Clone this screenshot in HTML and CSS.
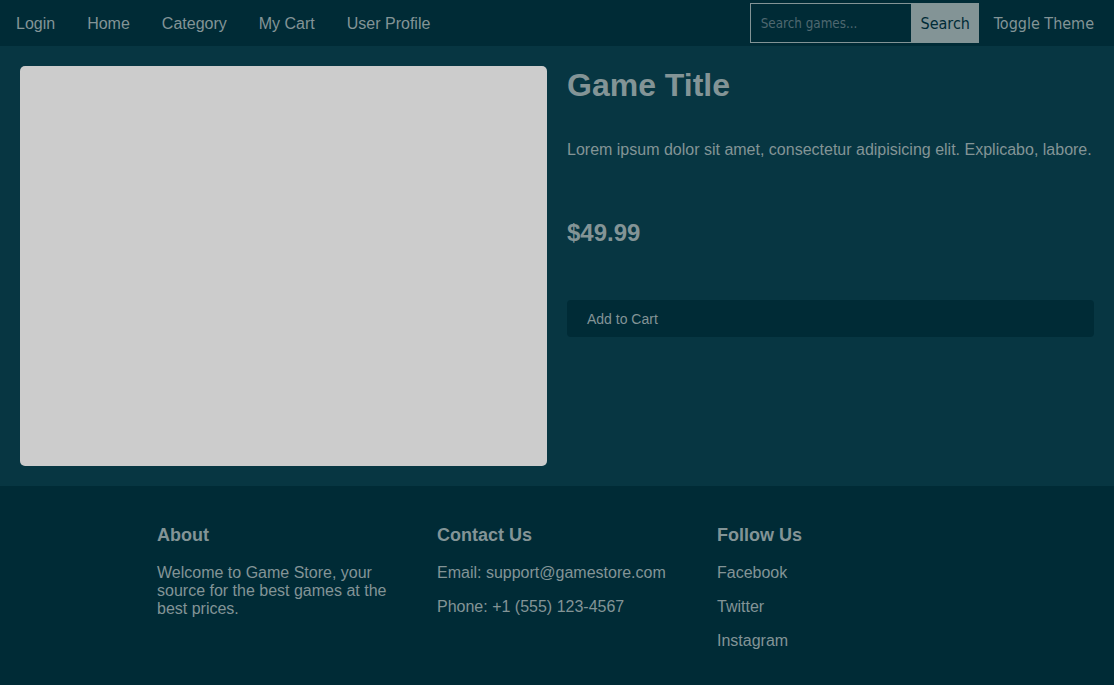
FILE: index.html
```html
<!DOCTYPE html>
<html lang="en">
<head>
<meta charset="utf-8">
<title>Game Store</title>
<link rel="stylesheet" href="styles.css">
</head>
<body>
<nav class="topnav">
  <div class="nav-links">
    <a href="#">Login</a>
    <a href="#">Home</a>
    <a href="#">Category</a>
    <a href="#">My Cart</a>
    <a href="#">User Profile</a>
  </div>
  <div class="nav-tools">
    <form class="search">
      <input type="text" placeholder="Search games...">
      <button type="button" class="search-btn">Search</button>
    </form>
    <button type="button" class="theme-btn">Toggle Theme</button>
  </div>
</nav>
<main class="product">
  <div class="product-image"></div>
  <div class="product-info">
    <h1 class="title">Game Title</h1>
    <p class="desc">Lorem ipsum dolor sit amet, consectetur adipisicing elit. Explicabo, labore.</p>
    <p class="price">$49.99</p>
    <button type="button" class="cart-btn">Add to Cart</button>
  </div>
</main>
<footer class="footer">
  <div class="footer-inner">
    <section class="footer-col">
      <h3>About</h3>
      <p>Welcome to Game Store, your source for the best games at the best prices.</p>
    </section>
    <section class="footer-col">
      <h3>Contact Us</h3>
      <p>Email: support@gamestore.com</p>
      <p>Phone: +1 (555) 123-4567</p>
    </section>
    <section class="footer-col">
      <h3>Follow Us</h3>
      <p><a href="#">Facebook</a></p>
      <p><a href="#">Twitter</a></p>
      <p><a href="#">Instagram</a></p>
    </section>
  </div>
</footer>
</body>
</html>
```

FILE: styles.css
```css
* { box-sizing: border-box; }
html, body { margin: 0; padding: 0; }
body {
  font-family: "Liberation Sans", Arial, sans-serif;
  font-size: 16px;
  color: #839496;
  background: #002b36;
}
a { color: #839496; text-decoration: none; }

.topnav {
  height: 46px;
  background: #002b36;
  display: flex;
  align-items: center;
  justify-content: space-between;
}
.nav-links { display: flex; align-items: center; height: 46px; }
.nav-links a { padding: 2px 16px 0; line-height: 44px; }
.nav-tools { display: flex; align-items: center; }
.search { display: flex; margin: 0; }
.search input {
  width: 162px;
  height: 40px;
  border: 1px solid #839496;
  background: #002b36;
  color: #839496;
  padding: 0 10px;
  font-family: "DejaVu Sans Condensed", "DejaVu Sans", sans-serif;
  font-size: 13.333px;
  outline: none;
}
.search input::placeholder { color: #4f6870; }
.search-btn {
  height: 40px;
  width: 67px;
  border: none;
  background: #839496;
  color: #002b36;
  font-family: "DejaVu Sans Condensed", "DejaVu Sans", sans-serif;
  font-size: 16px;
  padding: 0;
}
.theme-btn {
  height: 40px;
  border: none;
  background: transparent;
  color: #839496;
  font-family: "DejaVu Sans Condensed", "DejaVu Sans", sans-serif;
  font-size: 16px;
  padding: 0 20px 0 15px;
}

.product {
  background: #073642;
  display: grid;
  grid-template-columns: 1fr 1fr;
  gap: 20px;
  padding: 20px;
}
.product-image {
  height: 400px;
  background: #cccccc;
  border-radius: 5px;
}
.product-info { display: flex; flex-direction: column; align-items: stretch; }
.title {
  margin: 1px 0 0;
  font-size: 32px;
  font-weight: bold;
  line-height: 37px;
}
.desc { margin: 37px 0 0; line-height: 18px; }
.price {
  margin: 60px 0 0;
  font-size: 24px;
  font-weight: bold;
  line-height: 28px;
}
.cart-btn {
  margin-top: 53px;
  height: 37px;
  border: none;
  border-radius: 4px;
  background: #002b36;
  color: #839496;
  font-family: "Liberation Sans", Arial, sans-serif;
  font-size: 14px;
  text-align: left;
  padding: 0 20px;
}

.footer { background: #002b36; padding: 20px 0 18px; }
.footer-inner { width: 840px; margin: 0 auto; display: flex; }
.footer-col { width: 280px; padding: 0 20px; }
.footer-col h3 { font-size: 18px; margin: 19px 0 18px; line-height: 21px; }
.footer-col p { margin: 16px 0; line-height: 18px; }
.footer-col h3 + p { margin-top: 0; }
```
